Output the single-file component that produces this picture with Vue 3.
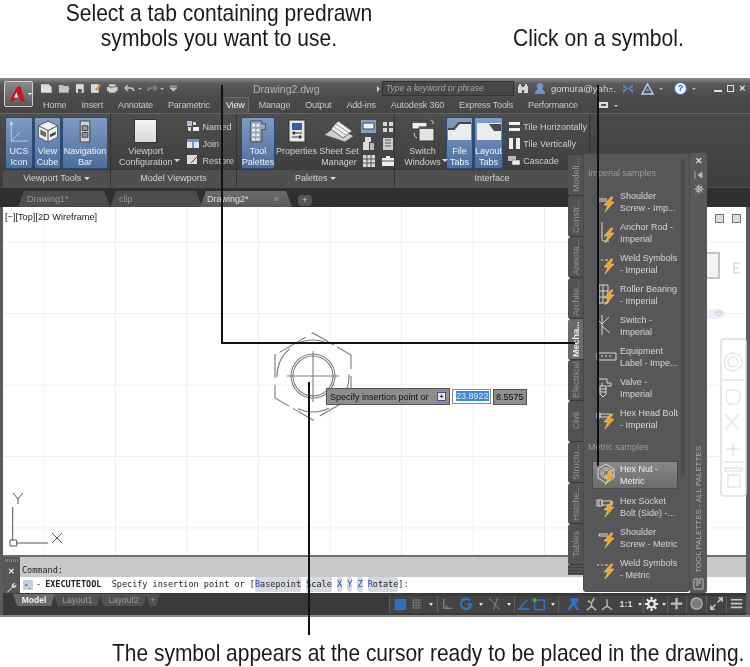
<script setup>
const ribbonTabs = ['Home', 'Insert', 'Annotate', 'Parametric', 'View', 'Manage', 'Output', 'Add-ins', 'Autodesk 360', 'Express Tools', 'Performance']

const paletteTabs = ['Modeli...', 'Constr...', 'Annota...', 'Archite...', 'Mecha...', 'Electrical', 'Civil', 'Structu...', 'Hatche...', 'Tables']

// icon: sketch path of each sample, bolt: orange lightning on top
const imperial = [
  { a: 'Shoulder', b: 'Screw - Imp...', icon: 'M2 9h9M2 11h9M2 9v2', bolt: true },
  { a: 'Anchor Rod -', b: 'Imperial', icon: 'M6 1v17q0 2 2 2h5', bolt: true },
  { a: 'Weld Symbols', b: '- Imperial', icon: 'M1 8h2M5 8h2M9 8h3', bolt: true },
  { a: 'Roller Bearing', b: '- Imperial', icon: 'M3 2h9v18h-9zM3 8h9M3 14h9M7 2v18', bolt: true },
  { a: 'Switch -', b: 'Imperial', icon: 'M1 5l5 5M6 1v20M6 10l7-7M6 12l8 7', bolt: false },
  { a: 'Equipment', b: 'Label - Impe...', icon: 'M1 8h19v7h-19zM5 11h2M9 11h2M13 11h2', bolt: false },
  { a: 'Valve -', b: 'Imperial', icon: 'M1 3h10v4h4v3h-4M6 7v3M4 10h6v8l-3 3-3-3zM4 13h6M4 16h6', bolt: false },
  { a: 'Hex Head Bolt', b: '- Imperial', icon: 'M1 6h3v5h-3zM4 7h10v3h-10z', bolt: true },
]
const metric = [
  { a: 'Hex Nut -', b: 'Metric', icon: 'M10 1l8 5v9l-8 5-8-5v-9zM10 5a5 5 0 1 0 .1 0zM10 7a3 3 0 1 0 .1 0z', bolt: true, on: true },
  { a: 'Hex Socket', b: 'Bolt (Side) -...', icon: 'M1 5h5v6h-5zM6 6h10v4h-10zM3 5v6', bolt: true },
  { a: 'Shoulder', b: 'Screw - Metric', icon: 'M3 8h9M3 10h9M3 8v2', bolt: true },
  { a: 'Weld Symbols', b: '- Metric', icon: 'M1 8h2M5 8h2M9 8h3', bolt: true },
]

const statusGroups = [
  [
    { w: 20, fill: '#2f6fc0', d: 'M3 3h12v12h-12z' },
    { w: 15, stroke: '#777', d: 'M2 4h11M2 7h11M2 10h11M2 13h11M4 3v11M7 3v11M10 3v11' },
    { w: 12, drop: true },
  ],
  [
    { w: 19, stroke: '#9a9a9a', d: 'M4 3v10h9M7 10v3' },
    { w: 18, stroke: '#2f73c8', width: 2.4, d: 'M13 5a5.5 5.5 0 1 0 1 4h-4' },
    { w: 11, drop: true },
    { w: 18, stroke: '#8a8a8a', d: 'M2 2l12 13M11 2l-4 13' },
    { w: 10, drop: true },
  ],
  [
    { w: 17, stroke: '#2f73c8', width: 1.8, d: 'M2 14h12M3 14l9-10' },
    { w: 15, stroke: '#2f73c8', width: 1.8, d: 'M3 4h11v11h-11z', dot: true },
    { w: 11, drop: true },
  ],
  [
    { w: 18, fill: '#2f73c8', d: 'M5 2h6q2 0 2 3t-3 3l4 7h-3l-3-5-4 5h-3l5-8q-2-2-1-5z' },
    { w: 17, stroke: '#b8b8b8', width: 1.6, d: 'M8 7v4M8 11l-5 4M8 11l5 4M4 5l3 2M11 2l-3 5' },
    { w: 15, stroke: '#b8b8b8', width: 1.6, d: 'M8 3v8M8 11l-6 4M8 11l6 4' },
    { w: 22, text: '1:1' },
    { w: 6, drop: true },
  ],
  [
    { w: 16, stroke: '#ececec', width: 2.2, d: 'M8 5a3.500 3.500 0 1 0 .1 0zM8 1v3M8 13v3M1 8.500h3M12 8.500h3M3 3.500l2 2M11 11.500l2 2M13 3.500l-2 2M5 11.500l-2 2' },
    { w: 7, drop: true },
  ],
  [{ w: 18, stroke: '#bdbdbd', width: 2.4, d: 'M8 2v12M2 8h12' }],
  [{ w: 19, fill: '#7c7c7c', stroke: '#a6a6a6', width: 1.6, d: 'M8 2a6 6 0 1 0 .1 0z' }],
  [{ w: 19, stroke: '#c8c8c8', width: 1.6, d: 'M9 7l5-5M10 2h4v4M7 9l-5 5M6 14h-4v-4' }],
  [{ w: 19, stroke: '#c8c8c8', width: 1.8, d: 'M2 4h12M2 8h12M2 12h12' }],
]
</script>

<template>
  <div class="page">
    <header class="callouts">
      <p class="note note-left">
        <span>Select a tab containing predrawn</span>
        <span>symbols you want to use.</span>
      </p>
      <p class="note note-right"><span>Click on a symbol.</span></p>
    </header>

    <main class="acad">
      <div class="title-bar">
        <div class="qat">
          <svg width="13" height="11" viewBox="0 0 13 11"><path d="M1 1h8l3 3v6h-11z" fill="#dcdcdc" /></svg>
          <svg width="13" height="11" viewBox="0 0 13 11"><path d="M1 2h4l1 1h5v7h-10z M3 5h9l-2 5" fill="#c4c4c4" /></svg>
          <svg width="10" height="11" viewBox="0 0 10 11"><path d="M1 1h8v9h-8z" fill="#dcdcdc" /><path d="M3 6h4v4h-4z" fill="#555" /></svg>
          <svg width="12" height="11" viewBox="0 0 12 11"><path d="M1 1h8v9h-8z" fill="#dcdcdc" /><path d="M6 7l5-5" stroke="#d58b2b" stroke-width="2" /></svg>
          <svg width="13" height="11" viewBox="0 0 13 11"><path d="M3 1h7v3h2v4h-2v2h-7v-2h-2v-4h2z" fill="#d0d0d0" /><path d="M3 4h7" stroke="#666" /></svg>
          <svg class="undo" width="11" height="9" viewBox="0 0 11 9"><path d="M4 1l-3 3 3 3M1 4h6q3 0 3 3" fill="none" stroke="#c6c6c6" stroke-width="1.4" /></svg>
          <span class="drop"></span>
          <svg class="redo" width="11" height="9" viewBox="0 0 11 9"><path d="M7 1l3 3-3 3M10 4h-6q-3 0-3 3" fill="none" stroke="#858585" stroke-width="1.4" /></svg>
          <span class="drop"></span>
          <svg width="9" height="9" viewBox="0 0 9 9"><path d="M1 2h7M1 4l3.500 3 3.500-3z" fill="#bdbdbd" stroke="#bdbdbd" /></svg>
        </div>
        <span class="doc-name">Drawing2.dwg</span>
        <span class="search-arrow"></span>
        <div class="search">Type a keyword or phrase</div>
        <svg class="binoc" width="12" height="11" viewBox="0 0 12 11"><path d="M1 3h4v7h-4zM7 3h4v7h-4zM2 1h2v2h-2zM8 1h2v2h-2zM5 4h2v3h-2z" fill="#d6d6d6" /></svg>
        <svg class="user" width="12" height="12" viewBox="0 0 12 12"><path d="M6 0a3 3 0 0 1 2 5.400l3 3.600v2h-10v-2l3-3.600a3 3 0 0 1 2-5.400z" fill="#6f94d6" /></svg>
        <span class="user-name">gomura@yah...</span>
        <span class="drop"></span>
        <svg class="xchange" width="12" height="11" viewBox="0 0 12 11"><path d="M1 1l5 4.500 5-4.500v3l-3 1.500 3 1.500v3l-5-4.500-5 4.500v-3l3-1.500-3-1.500z" fill="#5b85cc" /></svg>
        <svg class="tri" width="13" height="12" viewBox="0 0 13 12"><path d="M6.500 1l5.500 10h-11z" fill="none" stroke="#bcd0ee" stroke-width="1.400" /><circle cx="6.500" cy="7" r="1.600" fill="#6f94d6" /></svg>
        <span class="drop"></span>
        <span class="help">?</span>
        <span class="drop"></span>
        <div class="win-btns">
          <span class="min"></span>
          <span class="max"></span>
          <span class="close">✕</span>
        </div>
      </div>

      <button class="app-btn">
        <svg width="20" height="18" viewBox="0 0 20 18"><path d="M10 1h3l5 16h-4l-1-3-3-1-5 4h-4z" fill="#c3171c" /><path d="M9 7l2 6h-5z" fill="#d8d8d8" /></svg>
        <span class="app-drop"></span>
      </button>

      <nav class="ribbon-tabs">
        <a v-for="tab in ribbonTabs" :key="tab" class="rtab" :class="{ active: tab === 'View' }">{{ tab }}</a>
        <svg class="rtab-extra" width="9" height="6" viewBox="0 0 9 6"><path d="M0 0h9v6h-9z" fill="#dcdcdc" /><path d="M2 2h5v2h-5z" fill="#555" /></svg>
        <span class="drop"></span>
      </nav>

      <section class="ribbon">
        <div class="panel panel-tools">
          <div class="panel-body">
            <div class="big on ucs">
              <svg width="22" height="24" viewBox="0 0 22 24"><path d="M3 2v20h17M3 22l9-9" fill="none" stroke="#cdd9ea" stroke-width=".9" /><path d="M1.500 5l1.500-4 1.500 4z" fill="#e8eef6" /></svg>
              <span>UCS<br />Icon</span>
            </div>
            <div class="big on cube">
              <svg width="24" height="24" viewBox="0 0 24 24"><path d="M12 1l10 5v12l-10 5-10-5v-12z" fill="#f2f2f2" stroke="#555" /><path d="M2 6l10 5 10-5" fill="none" stroke="#444" /><path d="M12 11v12" stroke="#444" /><path d="M4 10l6 3v5l-6-3z" fill="#6a6a6a" /><path d="M14 18l6-3v-3l-6 3z" fill="#444" /></svg>
              <span>View<br />Cube</span>
            </div>
            <div class="big on nav">
              <svg width="12" height="24" viewBox="0 0 12 24"><path d="M1 1h10v22h-10z" fill="#cfd3d8" stroke="#444" /><path d="M3 6h6v5h-6zM3 13h6v5h-6z" fill="#8f959c" stroke="#444" /></svg>
              <span>Navigation<br />Bar</span>
            </div>
          </div>
          <div class="panel-label">Viewport Tools <i class="drop"></i></div>
        </div>

        <div class="panel panel-viewports">
          <div class="panel-body">
            <div class="big config">
              <div class="blank-view"></div>
              <span class="with-drop">Viewport<br />Configuration<i class="drop top"></i></span>
            </div>
            <ul class="small-list">
              <li>
                <svg width="12" height="11" viewBox="0 0 12 11"><path d="M0 0h5v5h-5z" fill="#a8c0dc" /><path d="M6 1h3v3h-3zM1 6h3v4h-3z" fill="#d8d8d8" /><path d="M6 6h6v4h-6z" fill="#eee" /></svg>Named
              </li>
              <li>
                <svg width="12" height="11" viewBox="0 0 12 11"><path d="M0 1h12v9h-12z" fill="#dfe7f2" /><path d="M0 1h12v3h-12zM5 1h2v9h-2z" fill="#6f94c8" /></svg>Join
              </li>
              <li>
                <svg width="12" height="11" viewBox="0 0 12 11"><path d="M0 0h10v9h-10z" fill="#dcdcdc" /><path d="M4 8l6-6" stroke="#444" /></svg>Restore
              </li>
            </ul>
          </div>
          <div class="panel-label">Model Viewports</div>
        </div>

        <div class="panel panel-palettes">
          <div class="panel-body">
            <div class="big on palettes">
              <svg width="18" height="24" viewBox="0 0 18 24"><path d="M1 1h12v3h4v6h-4v13h-12z" fill="#9aa6b6" stroke="#3e4c60" /><path d="M3 4h3v3h-3zM7.500 4h3v3h-3zM3 9h3v3h-3zM7.500 9h3v3h-3zM3 14h3v3h-3zM7.500 14h3v3h-3zM3 19h3v2h-3zM7.500 19h3v2h-3z" fill="#eef1f5" /></svg>
              <span>Tool<br />Palettes</span>
            </div>
            <div class="big props">
              <svg width="18" height="24" viewBox="0 0 18 24"><path d="M1 1h16v22h-16z" fill="#e6e6e6" stroke="#333" /><path d="M4 4h10v7h-10z" fill="#2f5fa0" /><path d="M4 14h10M4 18h10" stroke="#333" /><path d="M5 12.500h2v3h-2zM11 16.500h2v3h-2z" fill="#333" /></svg>
              <span>Properties</span>
            </div>
            <div class="big sheets">
              <svg width="32" height="24" viewBox="0 0 32 24"><path d="M1 16l11-8 19 9-9 6z" fill="#cfcfcf" stroke="#555" /><path d="M8 10l7-8 14 10-9 7z" fill="#f0f0f0" stroke="#666" /><path d="M13 5l13 9M11 8l13 9" stroke="#9a9a9a" /></svg>
              <span>Sheet Set<br />Manager</span>
            </div>
            <div class="mini-grid">
              <svg width="15" height="13" viewBox="0 0 15 13"><path d="M0 0h15v13h-15z" fill="#7aa0d0" /><path d="M2 3h11v6h-11z" fill="#eef2f7" stroke="#444" /></svg>
              <svg width="12" height="12" viewBox="0 0 12 12"><path d="M1 1h4v4h-4zM7 1h4v4h-4zM1 7h4v4h-4zM7 7h4v4h-4z" fill="#d6d6d6" /></svg>
              <svg width="11" height="13" viewBox="0 0 11 13"><path d="M2 0h6v5h-6zM0 5h6v8h-6z" fill="#dcdcdc" /><path d="M7 6h4v7h-4z" fill="#b9b9b9" /></svg>
              <svg width="10" height="12" viewBox="0 0 10 12"><path d="M0 0h10v12h-10z" fill="#cfcfcf" /><path d="M2 2h6M2 5h6M2 8h6" stroke="#555" /></svg>
              <svg width="12" height="12" viewBox="0 0 12 12"><path d="M0 0h12v12h-12z" fill="#d8d8d8" /><path d="M4 0v12M8 0v12M0 4h12M0 8h12" stroke="#555" /></svg>
              <svg width="12" height="12" viewBox="0 0 12 12"><path d="M4 1h4v2h4v8h-12v-8h4z" fill="#efefef" /><path d="M0 6h12" stroke="#555" /></svg>
            </div>
          </div>
          <div class="panel-label">Palettes <i class="drop"></i></div>
        </div>

        <div class="panel panel-interface">
          <div class="panel-body">
            <div class="big switch">
              <svg width="26" height="24" viewBox="0 0 26 24"><path d="M2 2h15v8h-15z" fill="#eee" stroke="#333" /><path d="M9 8h15v14h-15z" fill="#e4e4e4" stroke="#333" /><path d="M2 2h15v2h-15zM9 8h15v2h-15z" fill="#555" /><path d="M21 1q3 1 2 4M4 14q0 4 3 5" fill="none" stroke="#cfcfcf" /></svg>
              <span class="with-drop">Switch<br />Windows<i class="drop top"></i></span>
            </div>
            <div class="big on ftab">
              <svg width="23" height="17" viewBox="0 0 23 17"><path d="M0 6h6l5-6h12v17h-23z" fill="#ececec" /><path d="M0 6h6l5-6h12" fill="none" stroke="#444" stroke-width="2" /></svg>
              <span>File<br />Tabs</span>
            </div>
            <div class="big on ltab">
              <svg width="24" height="17" viewBox="0 0 24 17"><path d="M0 0h24v17h-24z" fill="#ececec" /><path d="M0 1h12l5 7h7v-7" fill="#484848" /></svg>
              <span>Layout<br />Tabs</span>
            </div>
            <ul class="small-list tile">
              <li><svg width="13" height="11" viewBox="0 0 13 11"><path d="M1 1h11v3h-11zM1 7h11v3h-11z" fill="#f0f0f0" /></svg>Tile Horizontally</li>
              <li><svg width="13" height="13" viewBox="0 0 13 13"><path d="M1 1h4v11h-4zM8 1h4v11h-4z" fill="#f0f0f0" /></svg>Tile Vertically</li>
              <li><svg width="13" height="11" viewBox="0 0 13 11"><path d="M0 1h8v5h-8z" fill="#bbb" /><path d="M4 5h8v5h-8z" fill="#eee" stroke="#444" stroke-width=".5" /></svg>Cascade</li>
            </ul>
          </div>
          <div class="panel-label">Interface</div>
        </div>
        <div class="panel panel-rest"></div>
      </section>

      <div class="doc-tabs">
        <span class="dtab">Drawing1*</span>
        <span class="dtab">clip</span>
        <span class="dtab active">Drawing2*<b>✕</b></span>
        <span class="dtab-plus">+</span>
      </div>

      <section class="viewport">
        <span class="vp-label">[−][Top][2D Wireframe]</span>

        <svg class="ucs-mark" width="60" height="60" viewBox="0 0 60 60">
          <path d="M5 3l5 6 5-6M10 9v5M4.700 17v33M2 50h6.700v6h-6.700zM9 53h31M44 43l10 10M54 43l-10 10" fill="none" stroke="#555" />
        </svg>

        <svg class="nut" width="90" height="96" viewBox="0 0 90 96">
          <g fill="none" stroke="#7c7c7c" stroke-width="1.100">
            <path d="M44 4l38 22v43l-38 22-38-22v-43z" stroke-dasharray="24 4 30 7" />
            <circle cx="44" cy="47" r="36" stroke-dasharray="32 8 32 40" />
            <circle cx="44" cy="47" r="22" />
            <circle cx="44" cy="47" r="20" />
            <path d="M18 47h52M44 22v51" />
          </g>
        </svg>

        <div class="dyn">
          <div class="dyn-tip">Specify insertion point or <i class="dyn-more">+</i></div>
          <div class="dyn-field"><em>23.8922</em></div>
          <div class="dyn-value">8.5575</div>
        </div>

        <!-- ghosted viewport controls behind the palette -->
        <div class="ghost-btns">
          <span></span><span></span>
        </div>
        <svg class="ghost-cube" width="40" height="112" viewBox="0 0 40 112">
          <path d="M-4 46h16v25h-16z" fill="#f3f3f5" stroke="#c4c4c4" stroke-width="2" />
          <path d="M33 56h-6v10h6M27 61h5" fill="none" stroke="#ddd" stroke-width="1.600" />
          <rect x="-2" y="102" width="19" height="10" rx="5" fill="#eeeefa" />
          <path d="M8 105l4 4 4-4z" fill="none" stroke="#c6c6dc" />
        </svg>
        <svg class="ghost-nav" width="28" height="160" viewBox="0 0 28 160">
          <rect x="1" y="1" width="25" height="157" rx="3" fill="#fff" stroke="#dedede" stroke-width="1.500" />
          <g fill="none" stroke="#e6e6e6" stroke-width="1.400">
            <circle cx="13" cy="24" r="9" /><circle cx="13" cy="24" r="5" />
            <path d="M3 42h21M3 124h21M7 62q-2-8 1-10h9q4 2 3 9l-3 5h-8zM5 76l14 16M19 76l-14 16M13 104v14M6 111h14M5 130h17v3h-17zM8 137h12v12h-12z" />
          </g>
        </svg>

        <aside class="palette">
          <div class="pal-tabs">
            <span v-for="tab in paletteTabs" :key="tab" class="pal-tab" :class="{ active: tab === 'Mecha...' }">{{ tab }}</span>
            <span class="pal-stripes"></span>
          </div>
          <div class="pal-body">
            <div class="pal-scroll"></div>
            <h4>Imperial samples</h4>
            <div v-for="item in imperial" :key="item.a + item.b" class="pal-item">
              <svg width="23" height="24" viewBox="0 0 23 24">
                <path :d="item.icon" fill="none" stroke="#d8d8d8" />
                <path v-if="item.bolt" d="M15 7l-7 8h4l-3 7 9-10h-4l3-5z" fill="#f5a01e" stroke="#ffe28a" stroke-width=".5" />
              </svg>
              <span>{{ item.a }}<br />{{ item.b }}</span>
            </div>
            <h4>Metric samples</h4>
            <div v-for="item in metric" :key="item.a + item.b" class="pal-item" :class="{ on: item.on }">
              <svg width="23" height="24" viewBox="0 0 23 24">
                <path :d="item.icon" fill="none" stroke="#d8d8d8" />
                <path v-if="item.bolt" d="M15 7l-7 8h4l-3 7 9-10h-4l3-5z" fill="#f5a01e" stroke="#ffe28a" stroke-width=".5" />
              </svg>
              <span>{{ item.a }}<br />{{ item.b }}</span>
            </div>
          </div>
          <div class="pal-bar">
            <span class="pal-x">✕</span>
            <svg width="9" height="8" viewBox="0 0 9 8"><path d="M1 0v8M8 1l-4 3 4 3z" stroke="#bbb" fill="#bbb" stroke-width=".8" /></svg>
            <svg width="10" height="10" viewBox="0 0 10 10"><path d="M5 2.500a2.500 2.500 0 1 0 .1 0z" fill="none" stroke="#bbb" stroke-width="2" stroke-dasharray="2 1" /><path d="M5 0v10M0 5h10M1.500 1.500l7 7M8.500 1.500l-7 7" stroke="#bbb" stroke-width=".7" /></svg>
            <span class="pal-title">TOOL PALETTES - ALL PALETTES</span>
            <svg class="pal-props" width="11" height="12" viewBox="0 0 11 12"><path d="M1 1h9v10h-9z" fill="none" stroke="#bbb" /><path d="M3 3h5M3 5h5M3 7h3" stroke="#bbb" /></svg>
          </div>
        </aside>
      </section>

      <section class="command">
        <div class="cmd-side">
          <span class="cmd-grip"></span>
          <span class="cmd-x">✕</span>
          <svg width="11" height="11" viewBox="0 0 11 11"><path d="M1 10l5-5q-1-3 2-4l1 .5-2 2 1 1 2-2 .5 1q-1 3-4 2l-5 5z" fill="#f0f0f0" /></svg>
        </div>
        <div class="cmd-main">
          <div class="cmd-history">Command:</div>
          <div class="cmd-line">
            <i class="cmd-prompt">&gt;_</i><i class="cmd-dash">-</i>
            <b>EXECUTETOOL</b>&nbsp; Specify insertion point or
            [<span class="opt first"><u>B</u>asepoint</span> <span class="opt"><u>S</u>cale</span> <span class="opt"><u>X</u></span> <span class="opt"><u>Y</u></span> <span class="opt"><u>Z</u></span> <span class="opt"><u>R</u>otate</span>]:
          </div>
        </div>
      </section>

      <footer class="status">
        <div class="layout-tabs">
          <span class="ltb active">Model</span>
          <span class="ltb">Layout1</span>
          <span class="ltb">Layout2</span>
          <span class="ltb plus">+</span>
        </div>
        <div class="status-btns">
          <div v-for="(group, g) in statusGroups" :key="g" class="sgroup">
            <template v-for="(btn, i) in group" :key="i">
              <span v-if="btn.drop" class="sdrop" :style="{ width: btn.w + 'px' }"><i class="drop"></i></span>
              <span v-else-if="btn.text" class="stext" :style="{ width: btn.w + 'px' }">{{ btn.text }}</span>
              <span v-else class="sicon" :style="{ width: btn.w + 'px' }">
                <svg width="16" height="16" viewBox="0 0 17 17">
                  <path :d="btn.d" :fill="btn.fill || 'none'" :stroke="btn.stroke || 'none'" :stroke-width="btn.width || 1" />
                  <rect v-if="btn.dot" x="1" y="2" width="4" height="4" fill="#3fae3f" />
                </svg>
              </span>
            </template>
          </div>
        </div>
      </footer>
    </main>

    <p class="caption">The symbol appears at the cursor ready to be placed in the drawing.</p>

    <!-- leader lines of the figure -->
    <span class="lead lead-a"></span>
    <span class="lead lead-a2"></span>
    <span class="lead lead-b"></span>
    <span class="lead lead-c"></span>
  </div>
</template>

<style>
body {
  background: #ffffff;
}
</style>

<style scoped>
.page {
  position: relative;
  width: 750px;
  height: 667px;
  overflow: hidden;
  background: #fff;
  font-family: 'Liberation Sans', Arial, sans-serif;
}

.callouts {
  display: flex;
  align-items: flex-end;
  height: 78px;
  padding-bottom: 28px;
  box-sizing: border-box;
}

.note {
  margin: 0;
  font-size: 24px;
  line-height: 24px;
  color: #1a1a1a;
  white-space: nowrap;
  transform: scaleX(0.877);
}

.note span {
  display: block;
}

.note span + span {
  margin-top: 1px;
}

.note-left {
  width: 438px;
  text-align: center;
}

.note-right {
  margin-left: 75px;
  transform-origin: left center;
}

.caption {
  margin: 23px 0 0 112px;
  width: 730px;
  font-size: 24px;
  line-height: 26px;
  color: #1a1a1a;
  white-space: nowrap;
  transform: scaleX(0.873);
  transform-origin: left center;
}

.lead {
  position: absolute;
  background: #111;
}

.lead-a {
  left: 221px;
  top: 85px;
  width: 2px;
  height: 259px;
}

.lead-a2 {
  left: 221px;
  top: 342px;
  width: 354px;
  height: 2px;
}

.lead-b {
  left: 597px;
  top: 85px;
  width: 2px;
  height: 381px;
}

.lead-c {
  left: 308px;
  top: 382px;
  width: 2px;
  height: 253px;
}

.acad {
  position: relative;
  height: 539px;
  background: #5c5c5c;
  border-bottom: 2px solid #8a8a8a;
  box-sizing: border-box;
  filter: blur(0.5px);
  font-size: 9px;
  color: #cfcfcf;
}

.drop {
  display: inline-block;
  width: 0;
  height: 0;
  border-left: 3px solid transparent;
  border-right: 3px solid transparent;
  border-top: 3px solid #d8d8d8;
  vertical-align: middle;
}

.with-drop {
  position: relative;
}

.drop.top {
  position: absolute;
  right: -7px;
  bottom: 6px;
}

.title-bar {
  display: flex;
  align-items: center;
  height: 19px;
  padding: 2px 4px 0 40px;
  box-sizing: border-box;
  background: linear-gradient(#8b8b8b, #5a5a5a 30%, #4a4a4a);
}

.title-bar .drop {
  margin-left: 5px;
  border-width: 2px 2.500px 0;
  border-top-color: #bdbdbd;
}

.qat {
  display: flex;
  align-items: center;
  gap: 5px;
  width: 138px;
  flex-shrink: 0;
}

.qat .drop {
  margin-left: -2px;
}

.doc-name {
  width: 199px;
  padding-left: 75px;
  box-sizing: border-box;
  font-size: 10.500px;
  color: #b4b4b4;
  flex-shrink: 0;
  white-space: nowrap;
}

.search-arrow {
  width: 0;
  height: 0;
  border-top: 3px solid transparent;
  border-bottom: 3px solid transparent;
  border-left: 3px solid #d0d0d0;
}

.search {
  width: 132px;
  height: 15px;
  margin-left: 2px;
  padding-left: 3px;
  box-sizing: border-box;
  flex-shrink: 0;
  background: #474747;
  border: 1px solid #333;
  font-size: 8.500px;
  line-height: 13px;
  font-style: italic;
  color: #a6a6a6;
}

.binoc {
  margin-left: 3px;
  flex-shrink: 0;
}

.user {
  margin-left: 5px;
  flex-shrink: 0;
}

.user-name {
  margin-left: 5px;
  width: 58px;
  font-size: 9.500px;
  white-space: nowrap;
  flex-shrink: 0;
  color: #cfd3d8;
}

.title-bar .user-name + .drop {
  margin-left: 0;
}

.xchange {
  margin-left: 9px;
  flex-shrink: 0;
}

.tri {
  margin-left: 7px;
  flex-shrink: 0;
}

.help {
  width: 11px;
  height: 11px;
  margin-left: 11px;
  flex-shrink: 0;
  border-radius: 50%;
  background: #f4f6fa;
  border: 1px solid #3a6ac0;
  font: bold 9px/11px 'Liberation Sans', sans-serif;
  text-align: center;
  color: #2a5ab4;
}

.win-btns {
  display: flex;
  align-items: center;
  gap: 5px;
  margin-left: auto;
}

.min {
  width: 8px;
  height: 2px;
  margin-top: 5px;
  background: #e0e0e0;
}

.max {
  width: 5px;
  height: 5px;
  border: 1px solid #e0e0e0;
}

.close {
  font-size: 8px;
  font-weight: bold;
  color: #eee;
}

.app-btn {
  position: absolute;
  left: 4px;
  top: 3px;
  display: flex;
  align-items: center;
  justify-content: flex-start;
  gap: 1px;
  width: 29px;
  height: 26px;
  padding: 0 0 0 3px;
  background: linear-gradient(#8a8a8a, #5a5a5a);
  border: 1px solid #cfcfcf;
  border-radius: 2px;
  box-sizing: border-box;
  z-index: 2;
}

.app-drop {
  width: 0;
  height: 0;
  border-left: 2px solid transparent;
  border-right: 2px solid transparent;
  border-top: 2px solid #fff;
}

.ribbon-tabs {
  display: flex;
  align-items: flex-end;
  gap: 15px;
  height: 16px;
  padding-left: 43px;
  box-sizing: border-box;
  background: linear-gradient(#4b4b4b, #454545);
  font-size: 9px;
  letter-spacing: -0.15px;
  color: #c8c8c8;
}

.rtab {
  line-height: 15px;
  white-space: nowrap;
}

.rtab.active {
  margin: 0 -5px 0 -3px;
  padding: 0 3px;
  background: #555;
  border: 1px solid #6a6a6a;
  border-bottom: 0;
  color: #eee;
}

.rtab-extra {
  margin: 0 3px 5px 6px;
}

.ribbon-tabs .drop {
  margin-bottom: 6px;
  margin-left: -12px;
  border-width: 2px 2px 0;
}

.ribbon {
  display: flex;
  height: 74px;
  padding: 0 0 0 3px;
  background: linear-gradient(#4e4e4e, #3a3a3a);
  border-top: 1px solid #666;
  box-sizing: border-box;
}

.panel {
  display: flex;
  flex-direction: column;
  border-right: 1px solid #333;
  box-sizing: border-box;
}

.panel-body {
  display: flex;
  flex: 1;
  padding: 3px 2px 0;
  gap: 1px;
}

.panel-label {
  height: 17px;
  background: #4f4f4f;
  border-top: 1px solid #393939;
  text-align: center;
  font-size: 9px;
  line-height: 17px;
  color: #d4d4d4;
}

.panel-tools {
  width: 108px;
}

.panel-viewports {
  width: 126px;
}

.panel-palettes {
  width: 158px;
}

.panel-interface {
  width: 195px;
}

.panel-rest {
  flex: 1;
  background: linear-gradient(#4a4a4a, #3e3e3e);
  border: 0;
}

.big {
  display: flex;
  flex-direction: column;
  align-items: center;
  height: 52px;
  padding-top: 2px;
  box-sizing: border-box;
  text-align: center;
  line-height: 11px;
  color: #d0d0d0;
  white-space: nowrap;
}

.big svg,
.blank-view {
  height: 24px;
  margin-bottom: 3px;
}

.big.on {
  background: linear-gradient(#7e9cc4, #4c6d9c);
  border: 1px solid #2d4a76;
  border-radius: 2px;
  color: #f0f4fa;
}

.ucs {
  width: 28px;
}

.cube {
  width: 27px;
}

.nav {
  width: 46px;
}

.config {
  width: 68px;
}

.blank-view {
  width: 23px;
  background: linear-gradient(#f4f4f4, #d8d8d8);
  border: 1px solid #333;
  box-sizing: border-box;
}

.small-list {
  list-style: none;
  margin: 1px 0 0;
  padding: 0 0 0 8px;
  color: #cfcfcf;
}

.small-list li {
  display: flex;
  align-items: center;
  gap: 3px;
  height: 17px;
  white-space: nowrap;
}

.palettes {
  width: 34px;
  margin-left: 2px;
}

.props {
  width: 42px;
}

.sheets {
  width: 38px;
  margin-left: 2px;
}

.mini-grid {
  display: grid;
  grid-template-columns: 19px 19px;
  grid-auto-rows: 17px;
  justify-items: center;
  align-items: center;
  margin-top: 1px;
}

.switch {
  width: 44px;
  margin: 0 1px 0 4px;
}

.ftab {
  width: 27px;
}

.ltab {
  width: 30px;
  margin-right: 2px;
}

.small-list.tile {
  padding-left: 2px;
  font-size: 9px;
}

.tile li {
  gap: 2px;
}

.doc-tabs {
  display: flex;
  align-items: flex-end;
  gap: 2px;
  height: 20px;
  padding-left: 18px;
  box-sizing: border-box;
  background: #303030;
  border-top: 1px solid #4e4e4e;
}

.dtab {
  display: flex;
  justify-content: space-between;
  align-items: center;
  width: 92px;
  height: 16px;
  padding: 0 12px 0 9px;
  box-sizing: border-box;
  margin-right: -2px;
  background: #4d4d4d;
  clip-path: polygon(0 100%, 6px 0, calc(100% - 6px) 0, 100% 100%);
  color: #969696;
}

.dtab.active {
  margin-left: -2px;
  padding-left: 7px;
  background: linear-gradient(#6c6c6c, #595959);
  color: #dedede;
}

.dtab b {
  font-weight: normal;
  font-size: 8px;
  color: #999;
}

.dtab-plus {
  margin: 0 0 1px 6px;
  width: 14px;
  height: 11px;
  background: #555;
  border-radius: 4px;
  text-align: center;
  line-height: 10px;
  color: #ccc;
}

.viewport {
  position: relative;
  height: 348px;
  margin: 0 4px 0 3px;
  background-color: #fff;
  background-image:
    linear-gradient(to right, #eef0f0 1px, transparent 1px),
    linear-gradient(to bottom, #eef0f0 1px, transparent 1px);
  background-size: 71.500px 71.500px;
  background-position: 40.500px 34.500px;
}

.vp-label {
  position: absolute;
  left: 2px;
  top: 5px;
  font-size: 9.200px;
  color: #222;
}

.ucs-mark {
  position: absolute;
  left: 5px;
  top: 283px;
}

.nut {
  position: absolute;
  left: 266px;
  top: 122px;
}

.dyn {
  position: absolute;
  left: 323px;
  top: 181px;
  display: flex;
  align-items: center;
  gap: 2px;
  font-size: 9px;
  color: #111;
}

.dyn-tip {
  display: flex;
  justify-content: space-between;
  align-items: center;
  width: 124px;
  height: 17px;
  padding: 0 3px;
  box-sizing: border-box;
  background: #8d8d8d;
  border: 1px solid #555;
}

.dyn-more {
  width: 7px;
  height: 7px;
  background: #e8e8f4;
  border: 1px solid #4a4a9a;
  font: bold 7px/7px 'Liberation Sans', sans-serif;
  text-align: center;
}

.dyn-field {
  width: 39px;
  height: 15px;
  padding-left: 3px;
  box-sizing: border-box;
  background: #fff;
  border: 1px solid #888;
  line-height: 13px;
}

.dyn-field em {
  font-style: normal;
  background: #3f88dc;
  color: #dfe9f6;
}

.dyn-value {
  width: 34px;
  height: 16px;
  padding-left: 2px;
  box-sizing: border-box;
  background: #8d8d8d;
  border: 1px solid #555;
  line-height: 14px;
}

.ghost-btns {
  position: absolute;
  right: 5px;
  top: 7px;
  display: flex;
  gap: 8px;
}

.ghost-btns span {
  width: 7px;
  height: 7px;
  background: #ddd;
  border: 1px solid #777;
}

.ghost-cube {
  position: absolute;
  left: 704px;
  top: 0;
}

.ghost-nav {
  position: absolute;
  left: 717px;
  top: 131px;
}

.palette {
  position: absolute;
  left: 565px;
  top: -54px;
  display: flex;
  height: 440px;
}

.pal-tabs {
  display: flex;
  flex-direction: column;
  width: 15px;
  padding-top: 2px;
}

.pal-tab {
  display: flex;
  align-items: center;
  justify-content: center;
  writing-mode: vertical-rl;
  transform: rotate(180deg);
  height: 41px;
  box-sizing: border-box;
  background: #525252;
  border-top: 1px solid #3a3a3a;
  border-radius: 0 3px 3px 0;
  font-size: 9px;
  line-height: 14px;
  color: #949494;
  white-space: nowrap;
}

.pal-tab.active {
  background: #6a6a6a;
  font-weight: bold;
  color: #f0f0f0;
}

.pal-stripes {
  height: 10px;
  background: repeating-linear-gradient(#555 0 2px, #3e3e3e 2px 3px);
}

.pal-body {
  position: relative;
  width: 107px;
  height: 439px;
  background: #575757;
  border: 1px solid #4a4a4a;
  border-radius: 3px;
  box-sizing: border-box;
  padding-top: 6px;
  font-size: 9px;
  color: #d6d6d6;
}

.pal-scroll {
  position: absolute;
  right: 4px;
  top: 5px;
  width: 4px;
  height: 316px;
  background: #4c4c4c;
  border-radius: 2px;
}

.pal-body h4 {
  margin: 0;
  height: 26px;
  padding-left: 4px;
  font-size: 9px;
  font-weight: normal;
  line-height: 26px;
  color: #9c9c9c;
}

.pal-item {
  display: flex;
  align-items: center;
  gap: 1px;
  width: 86px;
  height: 31px;
  margin-left: 8px;
  padding-left: 4px;
  box-sizing: border-box;
  line-height: 12px;
  white-space: nowrap;
}

.pal-item.on {
  background: linear-gradient(#888, #6c6c6c);
  border: 1px solid #4a4a4a;
  height: 28px;
  margin-top: 1px;
  margin-bottom: 2px;
  padding-left: 3px;
  color: #efefef;
}

.pal-bar {
  display: flex;
  flex-direction: column;
  align-items: center;
  width: 17px;
  height: 440px;
  padding-top: 3px;
  gap: 5px;
  box-sizing: border-box;
  background: #595959;
  border-radius: 0 3px 3px 0;
}

.pal-x {
  font-size: 9px;
  font-weight: bold;
  color: #ddd;
}

.pal-title {
  margin-top: auto;
  writing-mode: vertical-rl;
  transform: rotate(180deg);
  font-size: 8px;
  color: #a9a9a9;
  white-space: nowrap;
}

.pal-props {
  margin-bottom: 3px;
}

.command {
  display: flex;
  height: 38px;
  margin: 0 4px 0 3px;
  border-top: 2px solid #6d6d6d;
  box-sizing: border-box;
}

.cmd-side {
  display: flex;
  flex-direction: column;
  align-items: center;
  gap: 6px;
  width: 17px;
  background: #565656;
}

.cmd-grip {
  width: 13px;
  height: 3px;
  margin-top: 2px;
  background: repeating-linear-gradient(90deg, #888 0 1px, #565656 1px 2px);
}

.cmd-x {
  font-size: 8px;
  font-weight: bold;
  line-height: 8px;
  color: #eee;
}

.cmd-main {
  flex: 1;
  display: flex;
  flex-direction: column;
  font-family: 'DejaVu Sans Mono', monospace;
  font-size: 8.500px;
  color: #222;
}

.cmd-history {
  height: 20px;
  padding-left: 2px;
  background: #c8c8c8;
  line-height: 26px;
  box-sizing: border-box;
}

.cmd-line {
  flex: 1;
  padding-left: 3px;
  background: #fff;
  line-height: 15px;
  white-space: nowrap;
}

.cmd-prompt {
  display: inline-block;
  width: 10px;
  height: 10px;
  margin-right: 3px;
  background: #c4d0e0;
  font-style: normal;
  font-size: 6px;
  line-height: 10px;
  text-align: center;
}

.cmd-dash {
  margin-right: 4px;
  font-style: normal;
}

.opt {
  display: inline-block;
  background: #d6dae0;
  border-radius: 2px;
}

.opt u {
  text-decoration: none;
  color: #2c4aa0;
}

.status {
  display: flex;
  justify-content: space-between;
  align-items: flex-start;
  height: 22px;
  margin: 0 4px 0 3px;
  background: #3a3a3a;
}

.layout-tabs {
  display: flex;
  padding: 1px 0 0 10px;
}

.ltb {
  width: 47px;
  height: 12px;
  margin-right: -1px;
  background: #525252;
  clip-path: polygon(0 0, 100% 0, calc(100% - 4px) 100%, 4px 100%);
  text-align: center;
  line-height: 12px;
  font-size: 8.500px;
  color: #9a9a9a;
}

.ltb.active {
  width: 42px;
  background: #6a6a6a;
  font-weight: bold;
  color: #f4f4f4;
}

.ltb.plus {
  width: 14px;
}

.status-btns {
  display: flex;
  align-items: center;
  height: 20px;
  margin-top: 1px;
}

.sgroup {
  display: flex;
  align-items: center;
  height: 17px;
  background: #444;
  border-left: 1px solid #5c5c5c;
}

.sgroup:nth-child(4) {
  padding-left: 6px;
}

.sicon,
.sdrop,
.stext {
  display: flex;
  align-items: center;
  justify-content: center;
  height: 17px;
}

.sdrop .drop {
  border-width: 3px 2.500px 0;
  border-top-color: #e6e6e6;
}

.stext {
  font-size: 9px;
  font-weight: bold;
  color: #d8d8d8;
}
</style>
